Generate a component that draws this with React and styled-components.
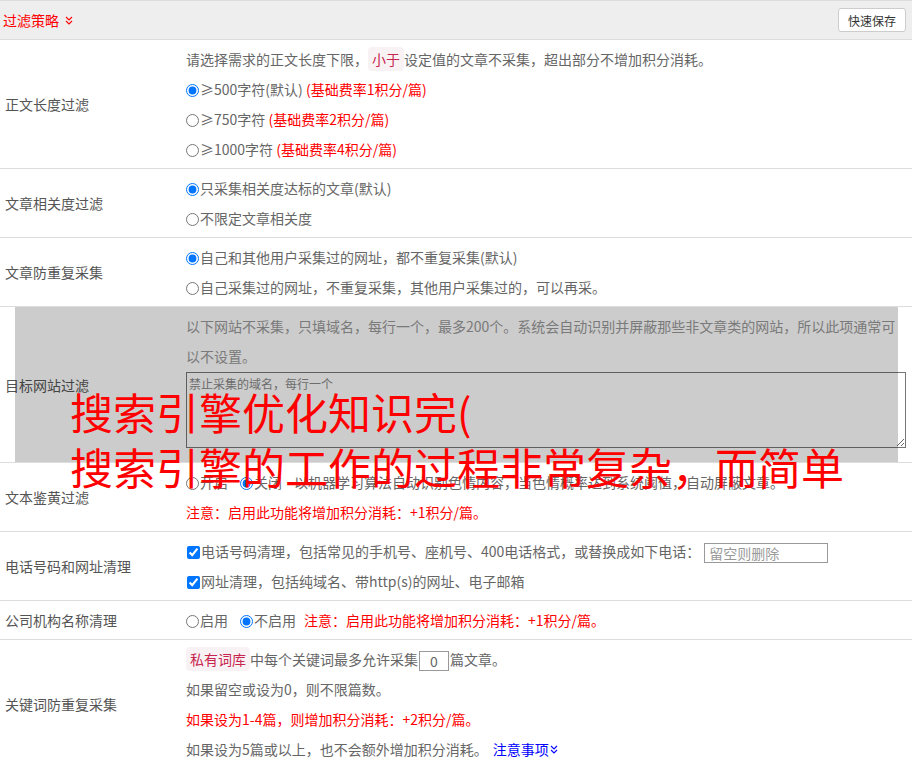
import React from "react";
import styled, { createGlobalStyle } from "styled-components";

const GlobalStyle = createGlobalStyle`
  html, body {
    margin: 0;
    padding: 0;
    background: #fff;
  }
  body {
    font-family: "Noto Sans CJK SC", "Noto Sans", sans-serif;
    font-size: 14px;
    color: #666;
  }
`;

const DoubleChevron = ({ color }) => (
  <ChevronIcon width="8" height="9" viewBox="0 0 8 9" color={color}>
    <path d="M1 1 L4 4 L7 1 M1 5 L4 8 L7 5" fill="none" stroke="currentColor" strokeWidth="1.1" />
  </ChevronIcon>
);

const App = () => (
  <Page>
    <GlobalStyle />
    <Header>
      <HeaderTitle>
        过滤策略
        <DoubleChevron color="#f00" />
      </HeaderTitle>
      <SaveButton>快速保存</SaveButton>
    </Header>

    <Row>
      <Label>正文长度过滤</Label>
      <Content>
        <Line>
          请选择需求的正文长度下限，<Code>小于</Code>设定值的文章不采集，超出部分不增加积分消耗。
        </Line>
        <Line>
          <Radio name="len" defaultChecked />≥500字符(默认) <Red>(基础费率1积分/篇)</Red>
        </Line>
        <Line>
          <Radio name="len" />≥750字符 <Red>(基础费率2积分/篇)</Red>
        </Line>
        <Line>
          <Radio name="len" />≥1000字符 <Red>(基础费率4积分/篇)</Red>
        </Line>
      </Content>
    </Row>

    <Row>
      <Label>文章相关度过滤</Label>
      <Content>
        <Line>
          <Radio name="rel" defaultChecked />只采集相关度达标的文章(默认)
        </Line>
        <Line>
          <Radio name="rel" />不限定文章相关度
        </Line>
      </Content>
    </Row>

    <Row>
      <Label>文章防重复采集</Label>
      <Content>
        <Line>
          <Radio name="dup" defaultChecked />自己和其他用户采集过的网址，都不重复采集(默认)
        </Line>
        <Line>
          <Radio name="dup" />自己采集过的网址，不重复采集，其他用户采集过的，可以再采。
        </Line>
      </Content>
    </Row>

    <Row>
      <Label>目标网站过滤</Label>
      <Content>
        <Line muted>
          以下网站不采集，只填域名，每行一个，最多200个。系统会自动识别并屏蔽那些非文章类的网站，所以此项通常可以不设置。
        </Line>
        <DomainArea placeholder="禁止采集的域名，每行一个" />
      </Content>
      <Shade />
      <AdText>
        搜索引擎优化知识完(
        <br />
        搜索引擎的工作的过程非常复杂，而简单
      </AdText>
    </Row>

    <Row>
      <Label>文本鉴黄过滤</Label>
      <Content>
        <Line>
          <Choice>
            <Radio name="porn" />开启
          </Choice>
          <Choice>
            <Radio name="porn" defaultChecked />关闭
          </Choice>
          以机器学习算法自动识别色情内容，当色情概率达到系统阈值，自动屏蔽文章。
        </Line>
        <Line>
          <Red>注意：启用此功能将增加积分消耗：+1积分/篇。</Red>
        </Line>
      </Content>
    </Row>

    <Row>
      <Label>电话号码和网址清理</Label>
      <Content>
        <Line>
          <Checkbox defaultChecked />电话号码清理，包括常见的手机号、座机号、400电话格式，或替换成如下电话：
          <PhoneInput placeholder="留空则删除" />
        </Line>
        <Line>
          <Checkbox defaultChecked />网址清理，包括纯域名、带http(s)的网址、电子邮箱
        </Line>
      </Content>
    </Row>

    <Row>
      <Label>公司机构名称清理</Label>
      <Content>
        <Line>
          <Choice>
            <Radio name="org" />启用
          </Choice>
          <Choice tight>
            <Radio name="org" defaultChecked />不启用
          </Choice>
          <Red>注意：启用此功能将增加积分消耗：+1积分/篇。</Red>
        </Line>
      </Content>
    </Row>

    <Row>
      <Label>关键词防重复采集</Label>
      <Content>
        <Line>
          <Code>私有词库</Code>中每个关键词最多允许采集<CountInput defaultValue="0" />篇文章。
        </Line>
        <Line>如果留空或设为0，则不限篇数。</Line>
        <Line>
          <Red>如果设为1-4篇，则增加积分消耗：+2积分/篇。</Red>
        </Line>
        <Line>
          如果设为5篇或以上，也不会额外增加积分消耗。
          <HelpLink>
            注意事项
            <DoubleChevron color="#00f" />
          </HelpLink>
        </Line>
      </Content>
    </Row>
  </Page>
);

const Page = styled.div`
  width: 912px;
  overflow: hidden;
`;

const Header = styled.div`
  display: flex;
  align-items: center;
  justify-content: space-between;
  height: 38px;
  padding: 0 6px 0 3px;
  background: #eee;
  border-top: 1px solid #ddd;
  border-bottom: 1px solid #ddd;
`;

const HeaderTitle = styled.div`
  display: flex;
  align-items: center;
  gap: 6px;
  color: #f00;
  font-size: 14px;
`;

const ChevronIcon = styled.svg`
  color: ${props => props.color};
  flex: none;
`;

const SaveButton = styled.button`
  height: 24px;
  padding: 0 9px;
  background: #fff;
  border: 1px solid #ccc;
  border-radius: 3px;
  font-family: inherit;
  font-size: 12px;
  color: #333;
  cursor: pointer;
`;

const Row = styled.div`
  position: relative;
  display: flex;
  align-items: center;
  padding: 4px 6px 4px 0;
  border-bottom: 1px solid #ddd;
`;

const Label = styled.div`
  flex: none;
  width: 181px;
  padding-left: 5px;
  color: #555;
  font-size: 14px;
`;

const Content = styled.div`
  flex: 1;
  min-width: 0;
`;

const Line = styled.div`
  line-height: 30px;
  color: ${props => (props.muted ? "#999" : "#666")};
  white-space: ${props => (props.muted ? "normal" : "nowrap")};
`;

const Red = styled.span`
  color: #f00;
`;

const Code = styled.span`
  padding: 2px 4px;
  background: #f9f2f4;
  color: #c7254e;
  border-radius: 4px;
`;

const Choice = styled.label`
  margin-right: ${props => (props.tight ? "8px" : "12px")};
`;

const Radio = styled.input.attrs({ type: "radio" })`
  width: 13px;
  height: 13px;
  margin: 0 1px 0 0;
  vertical-align: -2px;
`;

const Checkbox = styled.input.attrs({ type: "checkbox" })`
  width: 13px;
  height: 13px;
  margin: 0 1px 0 1px;
  vertical-align: -2px;
`;

const DomainArea = styled.textarea`
  display: block;
  box-sizing: border-box;
  width: 100%;
  height: 76px;
  margin: 1px 0 10px;
  padding: 2px;
  border: 1px solid #767676;
  font-family: inherit;
  font-size: 12px;
  color: #333;

  &::placeholder {
    color: #888;
  }
`;

const PhoneInput = styled.input`
  box-sizing: border-box;
  width: 124px;
  height: 20px;
  margin-left: 4px;
  padding: 0 4px;
  border: 1px solid #999;
  font-family: inherit;
  font-size: 14px;
  vertical-align: middle;

  &::placeholder {
    color: #999;
  }
`;

const CountInput = styled.input`
  box-sizing: border-box;
  width: 30px;
  height: 20px;
  margin: 0 1px;
  padding: 0;
  border: 1px solid #999;
  text-align: center;
  font-family: inherit;
  font-size: 14px;
  color: #666;
  vertical-align: middle;
`;

const HelpLink = styled.a`
  display: inline-flex;
  align-items: center;
  gap: 1px;
  margin-left: 5px;
  color: #00f;
  cursor: pointer;
`;

const Shade = styled.div`
  position: absolute;
  left: 15px;
  right: 14px;
  top: 0;
  bottom: 0;
  background: rgba(0, 0, 0, 0.2);
  pointer-events: none;
`;

const AdText = styled.div`
  position: absolute;
  left: 70px;
  top: 77px;
  z-index: 2;
  color: #f00;
  font-size: 43px;
  line-height: 55px;
  white-space: nowrap;
  pointer-events: none;
`;

export default App;
